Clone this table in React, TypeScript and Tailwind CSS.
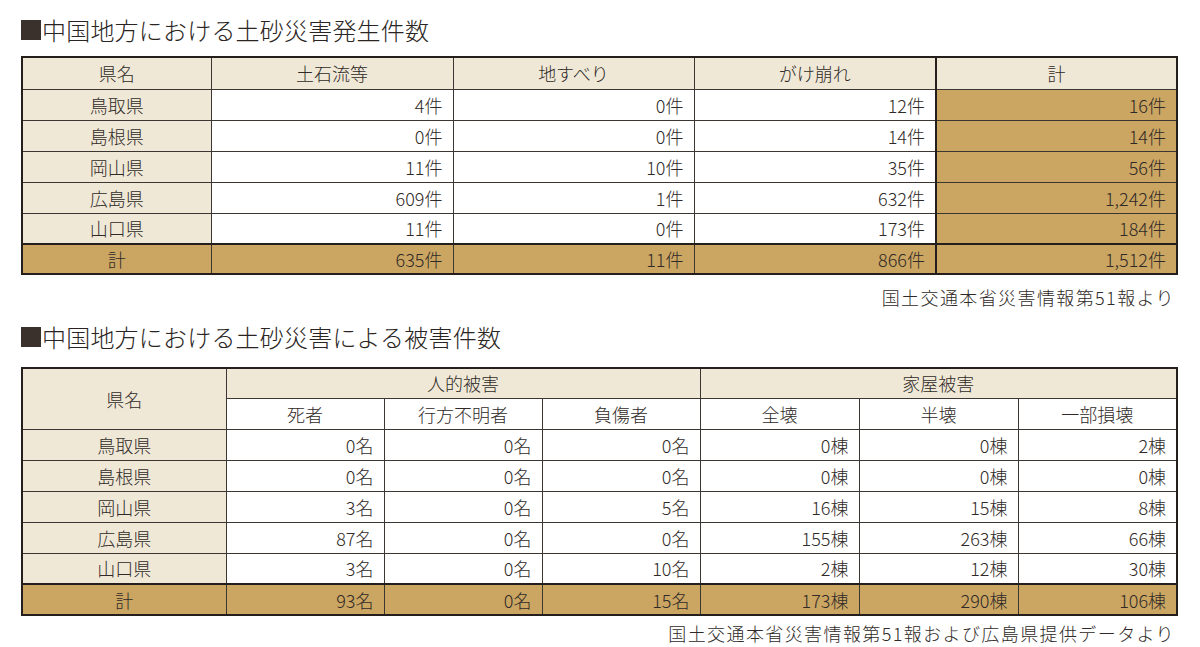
const font = "font-['Noto_Sans_CJK_JP','Noto_Sans',sans-serif]";

const cell = "border border-[#3b3632] px-[10px] py-0 leading-none font-light";
const cream = "bg-[#efe8d7]";
const gold = "bg-[#cba562]";

const table1 = [
  ["鳥取県", "4件", "0件", "12件", "16件"],
  ["島根県", "0件", "0件", "14件", "14件"],
  ["岡山県", "11件", "10件", "35件", "56件"],
  ["広島県", "609件", "1件", "632件", "1,242件"],
  ["山口県", "11件", "0件", "173件", "184件"],
];

const table2 = [
  ["鳥取県", "0名", "0名", "0名", "0棟", "0棟", "2棟"],
  ["島根県", "0名", "0名", "0名", "0棟", "0棟", "0棟"],
  ["岡山県", "3名", "0名", "5名", "16棟", "15棟", "8棟"],
  ["広島県", "87名", "0名", "0名", "155棟", "263棟", "66棟"],
  ["山口県", "3名", "0名", "10名", "2棟", "12棟", "30棟"],
];

function Title({ children }: { children: React.ReactNode }) {
  return (
    <h2 className="flex items-center text-[24px] font-light leading-[32px] tracking-[0.2px] text-[#2a2522]">
      <span className="mr-[1px] inline-block h-[20px] w-[20px] bg-[#3a302c]" />
      {children}
    </h2>
  );
}

export default function App() {
  return (
    <div className={`${font} w-[1200px] h-[647px] overflow-hidden bg-white px-[21px] pt-[14px] text-[18px] text-[#2f2a27]`}>
      <Title>中国地方における土砂災害発生件数</Title>

      <table className="mt-[10px] w-[1155px] table-fixed border-collapse border-2 border-[#241f1c]">
        <colgroup>
          <col className="w-[189px]" />
          <col className="w-[242px]" />
          <col className="w-[241px]" />
          <col className="w-[242px]" />
          <col className="w-[241px]" />
        </colgroup>
        <thead>
          <tr className="h-[32px]">
            <th className={`${cell} ${cream}`}>県名</th>
            <th className={`${cell} ${cream}`}>土石流等</th>
            <th className={`${cell} ${cream}`}>地すべり</th>
            <th className={`${cell} ${cream}`}>がけ崩れ</th>
            <th className={`${cell} ${cream} border-l-2 border-l-[#241f1c]`}>計</th>
          </tr>
        </thead>
        <tbody>
          {table1.map((row) => (
            <tr key={row[0]} className="h-[31px]">
              <td className={`${cell} ${cream} text-center`}>{row[0]}</td>
              <td className={`${cell} text-right`}>{row[1]}</td>
              <td className={`${cell} text-right`}>{row[2]}</td>
              <td className={`${cell} text-right`}>{row[3]}</td>
              <td className={`${cell} ${gold} border-l-2 border-l-[#241f1c] text-right`}>{row[4]}</td>
            </tr>
          ))}
          <tr className="h-[30px]">
            <td className={`${cell} ${gold} border-t-2 border-t-[#241f1c] text-center`}>計</td>
            <td className={`${cell} ${gold} border-t-2 border-t-[#241f1c] text-right`}>635件</td>
            <td className={`${cell} ${gold} border-t-2 border-t-[#241f1c] text-right`}>11件</td>
            <td className={`${cell} ${gold} border-t-2 border-t-[#241f1c] text-right`}>866件</td>
            <td className={`${cell} ${gold} border-t-2 border-t-[#241f1c] border-l-2 border-l-[#241f1c] text-right`}>1,512件</td>
          </tr>
        </tbody>
      </table>

      <p className="mt-[10px] pr-[4px] text-right text-[18px] font-light leading-[24px] tracking-[1.4px]">国土交通本省災害情報第51報より</p>

      <div className="mt-[12px]">
        <Title>中国地方における土砂災害による被害件数</Title>
      </div>

      <table className="mt-[14px] w-[1155px] table-fixed border-collapse border-2 border-[#241f1c]">
        <colgroup>
          <col className="w-[204px]" />
          <col className="w-[158px]" />
          <col className="w-[158px]" />
          <col className="w-[158px]" />
          <col className="w-[159px]" />
          <col className="w-[159px]" />
          <col className="w-[159px]" />
        </colgroup>
        <thead>
          <tr className="h-[30px]">
            <th rowSpan={2} className={`${cell} ${cream}`}>県名</th>
            <th colSpan={3} className={`${cell} ${cream}`}>人的被害</th>
            <th colSpan={3} className={`${cell} ${cream}`}>家屋被害</th>
          </tr>
          <tr className="h-[31px]">
            {["死者", "行方不明者", "負傷者", "全壊", "半壊", "一部損壊"].map((h) => (
              <th key={h} className={`${cell} bg-white`}>{h}</th>
            ))}
          </tr>
        </thead>
        <tbody>
          {table2.map((row) => (
            <tr key={row[0]} className="h-[31px]">
              <td className={`${cell} ${cream} text-center`}>{row[0]}</td>
              {row.slice(1).map((v, i) => (
                <td key={i} className={`${cell} text-right`}>{v}</td>
              ))}
            </tr>
          ))}
          <tr className="h-[31px]">
            <td className={`${cell} ${gold} border-t-2 border-t-[#241f1c] text-center`}>計</td>
            {["93名", "0名", "15名", "173棟", "290棟", "106棟"].map((v, i) => (
              <td key={i} className={`${cell} ${gold} border-t-2 border-t-[#241f1c] text-right`}>{v}</td>
            ))}
          </tr>
        </tbody>
      </table>

      <p className="mt-[5px] pr-[4px] text-right text-[18px] font-light leading-[24px] tracking-[1.4px]">国土交通本省災害情報第51報および広島県提供データより</p>
    </div>
  );
}
